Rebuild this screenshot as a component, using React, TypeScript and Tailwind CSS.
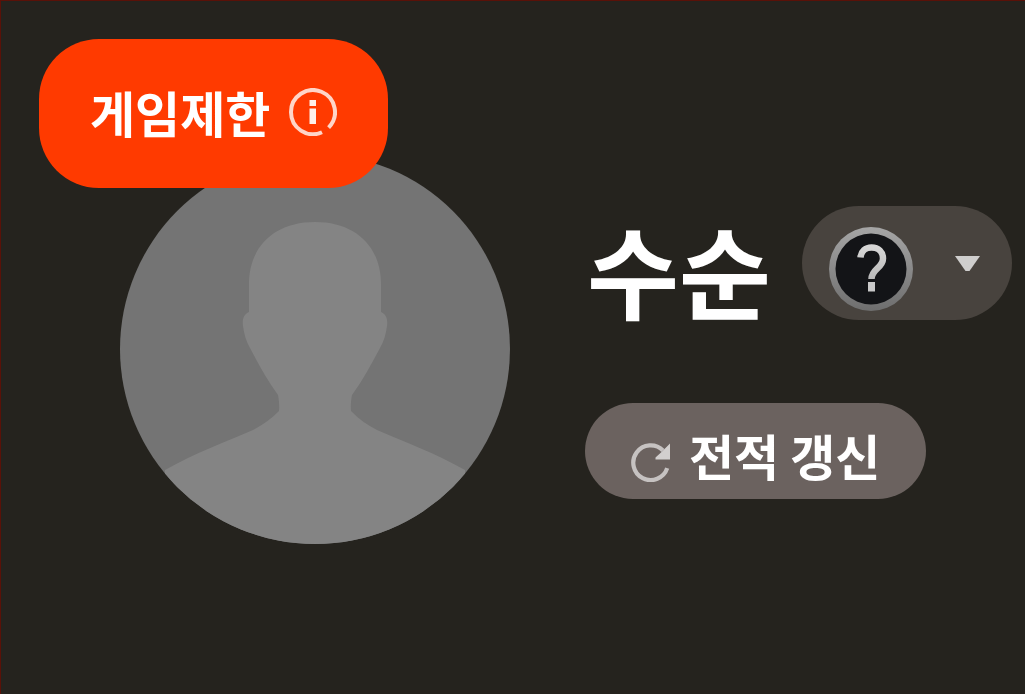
import { useState } from 'react';

function InfoIcon() {
  return (
    <svg viewBox="0 0 48 48" className="w-12 h-12 shrink-0" fill="none" aria-hidden="true">
      <path d="M33 44.2A22 22 0 0 1 2 24A22 22 0 1 1 39.6 39.6" stroke="#ffd5c8" strokeWidth="4" />
      <path d="M20.5 12h6.5v6h-6.5zM20.5 20.5h6.5v15.5h-6.5z" fill="#fff0ea" />
    </svg>
  );
}

function RefreshIcon() {
  return (
    <svg viewBox="0 0 39 39" className="w-[39px] h-[39px] shrink-0" fill="none" aria-hidden="true">
      <path d="M36.2 25.2A17.4 17.4 0 1 1 32 7.4" stroke="#c6c2c1" strokeWidth="4.2" />
      <path d="M39 0.5V16.5H24.5V14.5L30 9.5z" fill="#d2cfce" />
    </svg>
  );
}

function UnknownBadge() {
  return (
    <svg viewBox="0 0 84 84" className="w-[84px] h-[84px] shrink-0" fill="none" aria-hidden="true">
      <defs>
        <linearGradient id="ring" x1="0" y1="0" x2="0" y2="1">
          <stop offset="0" stopColor="#a6a6a6" />
          <stop offset="1" stopColor="#6e6e6e" />
        </linearGradient>
        <linearGradient id="mark" x1="0" y1="0" x2="0" y2="1">
          <stop offset="0" stopColor="#d6d6d6" />
          <stop offset="1" stopColor="#b9b9b9" />
        </linearGradient>
      </defs>
      <circle cx="42" cy="42" r="42" fill="url(#ring)" />
      <circle cx="42" cy="42" r="35.5" fill="#131417" />
      <path
        d="M31.5 30.500C32 24.500 36.500 20.500 42.500 20.500C49.500 20.500 54 25 54 31.500C54 41 42.500 42 42.500 52"
        stroke="url(#mark)"
        strokeWidth="6.5"
      />
      <path d="M39 55h7v9.500h-7z" fill="#c9c9c9" />
    </svg>
  );
}

function Avatar() {
  return (
    <svg viewBox="0 0 390 390" className="w-[390px] h-[390px] rounded-full bg-[#747474]" role="img" aria-label="수순">
      <path
        d="M195 68C153 68 129 94 129 130V158C124 160 122 165 123 172C124 180 126 187 130 194C138 209 147 226 158 241C159 246 159.500 252 159 257C151 265 143 271 133 276C105 288 75 299 45 316V390H345V316C315 299 285 288 257 276C247 271 239 265 231 257C230.500 252 231 246 232 241C243 226 252 209 260 194C264 187 266 180 267 172C268 165 266 160 261 158V130C261 94 237 68 195 68Z"
        fill="#848484"
      />
    </svg>
  );
}

export default function App() {
  const [open, setOpen] = useState(false);

  return (
    <main className="min-h-screen bg-[#25231e] border-t border-l border-[#5a1108] pt-[153px] pl-[119px] text-white font-bold font-['Noto_Sans_CJK_KR',sans-serif]">
      <section className="flex items-start gap-[75px]">
        <div className="relative shrink-0">
          <Avatar />
          <button className="absolute -top-[115px] -left-[81px] h-[149px] px-[51px] pb-1 flex items-center gap-[19px] rounded-[60px] bg-[#ff3a00] text-[49px] leading-none whitespace-nowrap">
            게임제한
            <InfoIcon />
          </button>
        </div>

        <div className="shrink-0 pt-[52px]">
          <div className="flex items-start gap-[31px] pl-0.5">
            <h1 className="text-[100px] leading-[126px] whitespace-nowrap">수순</h1>
            <button
              aria-haspopup="menu"
              aria-expanded={open}
              aria-label="티어"
              onClick={() => setOpen(!open)}
              className="h-[114px] pl-[27px] pr-8 pt-[11px] flex items-center gap-[42px] rounded-full bg-[#48433e]"
            >
              <UnknownBadge />
              <svg viewBox="0 0 25 15" className="w-[25px] h-[15px] mb-2.5" aria-hidden="true">
                <path d="M0 0H25L14.500 15H10.500z" fill="#cfcecd" />
              </svg>
            </button>
          </div>

          <button className="mt-[71px] h-24 px-[46px] pb-[17px] flex items-end gap-[19px] rounded-full bg-[#6b625f] text-[49px] leading-[54px] whitespace-nowrap">
            <RefreshIcon />
            전적 갱신
          </button>
        </div>
      </section>
    </main>
  );
}
